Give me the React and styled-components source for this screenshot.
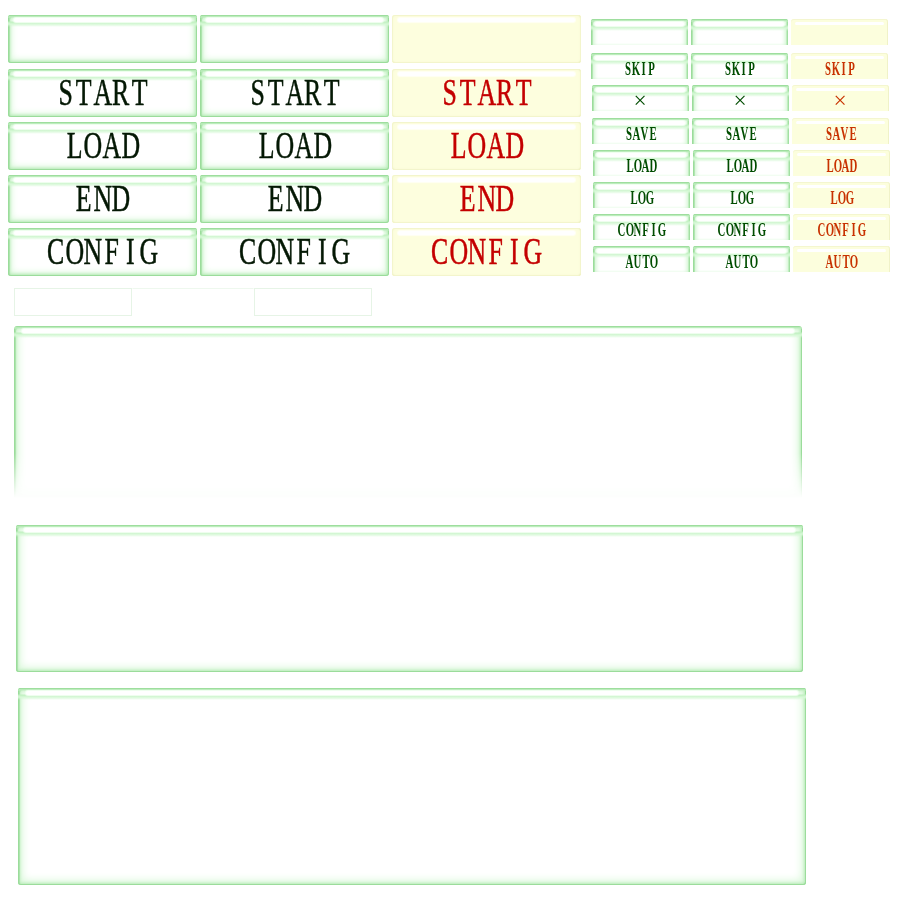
import React from "react";
import styled, { createGlobalStyle, css } from "styled-components";

const Global = createGlobalStyle`
  html, body { margin: 0; padding: 0; background: #ffffff; }
  body { width: 900px; height: 900px; overflow: hidden; font-family: "Liberation Serif", "DejaVu Serif", serif; }
`;

const Page = styled.div`
  display: flex;
  flex-direction: column;
  width: 900px;
`;

const TopSection = styled.div`
  display: flex;
  align-items: flex-start;
`;

const BigGrid = styled.div`
  display: grid;
  grid-template-columns: repeat(3, 189px);
  grid-template-rows: 49px repeat(4, 48px);
  column-gap: 3px;
  row-gap: 5px;
  padding: 15px 0 0 8px;
  align-items: start;
`;

const SmallPanel = styled.div`
  display: flex;
  flex-direction: column;
  margin-left: 10px;
  padding-top: 19px;
`;

const SmallRow = styled.div`
  display: flex;
  gap: 3px;
  margin-top: ${(p) => p.$top}px;
  padding-left: ${(p) => p.$shift}px;
`;

const TopBand = css`
  &::before {
    content: "";
    position: absolute;
    left: 0;
    right: 0;
    top: 0;
    height: 12px;
    border-radius: 3px 3px 0 0;
    background: linear-gradient(
        to bottom,
        #93d893 0,
        #a9e4a9 1px,
        #c4f0c4 2px,
        rgba(255, 255, 255, 0) 3px
      ),
      linear-gradient(
        to bottom,
        rgba(255, 255, 255, 0) 0,
        rgba(255, 255, 255, 0) 6px,
        #bff0bf 7px,
        #d6f8d6 9px,
        rgba(255, 255, 255, 0) 12px
      );
    pointer-events: none;
  }
  &::after {
    content: "";
    position: absolute;
    left: ${(p) => p.$hl || 6}px;
    right: ${(p) => p.$hl || 6}px;
    top: 3px;
    height: 4px;
    border-radius: 2px;
    background: #ffffff;
    box-shadow: 0 0 1px 1px #f2fff2;
    pointer-events: none;
  }
`;

const greenGlow = css`
  box-shadow: inset 0 0 0 1px #9bdc9b, inset 2px 2px 0 #ade4ad,
    inset 0 0 3px 2px #b6eab6, inset 0 0 7px 3px #d4f7d4;
`;

const BigButton = styled.div`
  position: relative;
  height: 48px;
  border-radius: 3px;
  text-align: center;
  line-height: 47px;
  font-size: 38px;
  -webkit-text-stroke: 0.5px currentColor;
  ${(p) =>
    p.$tone === "yellow"
      ? css`
          background: #fdfede;
          box-shadow: inset 0 0 0 1px #f3f5cc, inset -1px 0 0 #e9ebb6,
            inset 0 -1px 0 #eef0c2, inset 0 0 3px 1px #f8fad8;
          color: #c40000;
          &::after {
            content: "";
            position: absolute;
            left: 6px;
            right: 6px;
            top: 3px;
            height: 4px;
            border-radius: 2px;
            background: #ffffff;
            box-shadow: 0 0 1px 1px #fffff4;
          }
        `
      : css`
          background: #ffffff;
          color: #041804;
          ${greenGlow}
          ${TopBand}
        `}
`;

const SmallButton = styled.div`
  position: relative;
  width: 97px;
  height: 26px;
  box-sizing: border-box;
  padding-top: 5px;
  line-height: 23px;
  font-size: 18px;
  font-weight: bold;
  text-align: center;
  border-radius: 3px 3px 0 0;
  ${(p) =>
    p.$tone === "yellow"
      ? css`
          background: #fcfedd;
          color: #c83200;
          box-shadow: inset 0 1px 0 #f4f6d0, inset -1px 0 0 #f0f2c8;
          &::after {
            content: "";
            position: absolute;
            left: 4px;
            right: 4px;
            top: 3px;
            height: 3px;
            border-radius: 2px;
            background: #ffffff;
          }
        `
      : css`
          background: #ffffff;
          color: #004d00;
          box-shadow: inset 1px 0 0 #9bdc9b, inset -1px 0 0 #a3dfa3,
            inset 2px 2px 0 #b2e6b2, inset -2px 0 0 #c0eec0,
            inset 5px 0 4px -2px #c8f2c8, inset -5px 0 4px -2px #cdf3cd;
          ${TopBand}
        `}
`;

const LabelWrap = styled.span`
  position: relative;
  z-index: 1;
  display: inline-block;
  white-space: nowrap;
`;

const Cell = styled.span`
  display: inline-flex;
  justify-content: center;
  width: ${(p) => p.$w}px;
`;

const Glyph = styled.span`
  display: inline-block;
  font-weight: ${(p) => (p.$thin ? "normal" : "inherit")};
  transform: scale(${(p) => p.$s}, ${(p) => p.$y || 1});
`;

const Label = ({ text, big }) => (
  <LabelWrap>
    {[...text].map((c, i) =>
      c === "×" ? (
        <Cell key={i} $w={14}>
          <Glyph $s={1.3} $y={1.25} $thin>
            {c}
          </Glyph>
        </Cell>
      ) : (
        <Cell key={i} $w={big ? 18.6 : 8}>
          <Glyph $s={big ? 0.68 : 0.6}>{c}</Glyph>
        </Cell>
      )
    )}
  </LabelWrap>
);

const FaintRow = styled.div`
  display: flex;
  margin: 12px 0 0 14px;
`;

const FaintBox = styled.div`
  width: ${(p) => p.$w}px;
  height: 28px;
  box-sizing: border-box;
  border: 1px solid #e6f4e6;
  ${(p) =>
    p.$open &&
    css`
      border-color: #eef8ee transparent transparent transparent;
    `}
`;

const Panel = styled.div`
  position: relative;
  width: ${(p) => p.$w}px;
  height: ${(p) => p.$h}px;
  margin-left: ${(p) => p.$left}px;
  margin-top: ${(p) => p.$top}px;
  border-radius: 3px;
  background: #ffffff;
  box-shadow: inset 0 0 0 1px #9bdc9b, inset 2px 2px 0 #ade4ad,
    inset -1px 0 0 #a6e1a6, inset 0 0 3px 2px #b8ebb8,
    inset 0 0 8px 4px #d6f7d6;
  ${TopBand}
  &::after {
    left: 8px;
    right: 8px;
  }
  ${(p) =>
    p.$fade &&
    css`
      border-radius: 3px 3px 0 0;
      -webkit-mask-image: linear-gradient(
        to bottom,
        #000 0,
        #000 calc(100% - 45px),
        transparent 100%
      );
      mask-image: linear-gradient(
        to bottom,
        #000 0,
        #000 calc(100% - 45px),
        transparent 100%
      );
    `}
`;

const bigRows = ["", "START", "LOAD", "END", "CONFIG"];
const tones = ["green", "green", "yellow"];

const smallRows = [
  { text: "", top: 0, shift: 0 },
  { text: "SKIP", top: 8, shift: 0 },
  { text: "×", top: 6, shift: 1 },
  { text: "SAVE", top: 7, shift: 1 },
  { text: "LOAD", top: 6, shift: 2 },
  { text: "LOG", top: 6, shift: 2 },
  { text: "CONFIG", top: 6, shift: 2 },
  { text: "AUTO", top: 6, shift: 2 },
];

export default function App() {
  return (
    <Page>
      <Global />
      <TopSection>
        <BigGrid>
          {bigRows.map((t, r) =>
            tones.map((tone, c) => (
              <BigButton key={`${r}-${c}`} $tone={tone}>
                {t && <Label text={t} big />}
              </BigButton>
            ))
          )}
        </BigGrid>
        <SmallPanel>
          {smallRows.map((row, r) => (
            <SmallRow key={r} $top={row.top} $shift={row.shift}>
              {tones.map((tone, c) => (
                <SmallButton key={c} $tone={tone} $hl={4}>
                  {row.text && <Label text={row.text} />}
                </SmallButton>
              ))}
            </SmallRow>
          ))}
        </SmallPanel>
      </TopSection>
      <FaintRow>
        <FaintBox $w={118} />
        <FaintBox $w={122} $open />
        <FaintBox $w={118} />
      </FaintRow>
      <Panel $w={788} $h={172} $left={14} $top={10} $fade />
      <Panel $w={787} $h={147} $left={16} $top={27} />
      <Panel $w={788} $h={197} $left={18} $top={16} />
    </Page>
  );
}
